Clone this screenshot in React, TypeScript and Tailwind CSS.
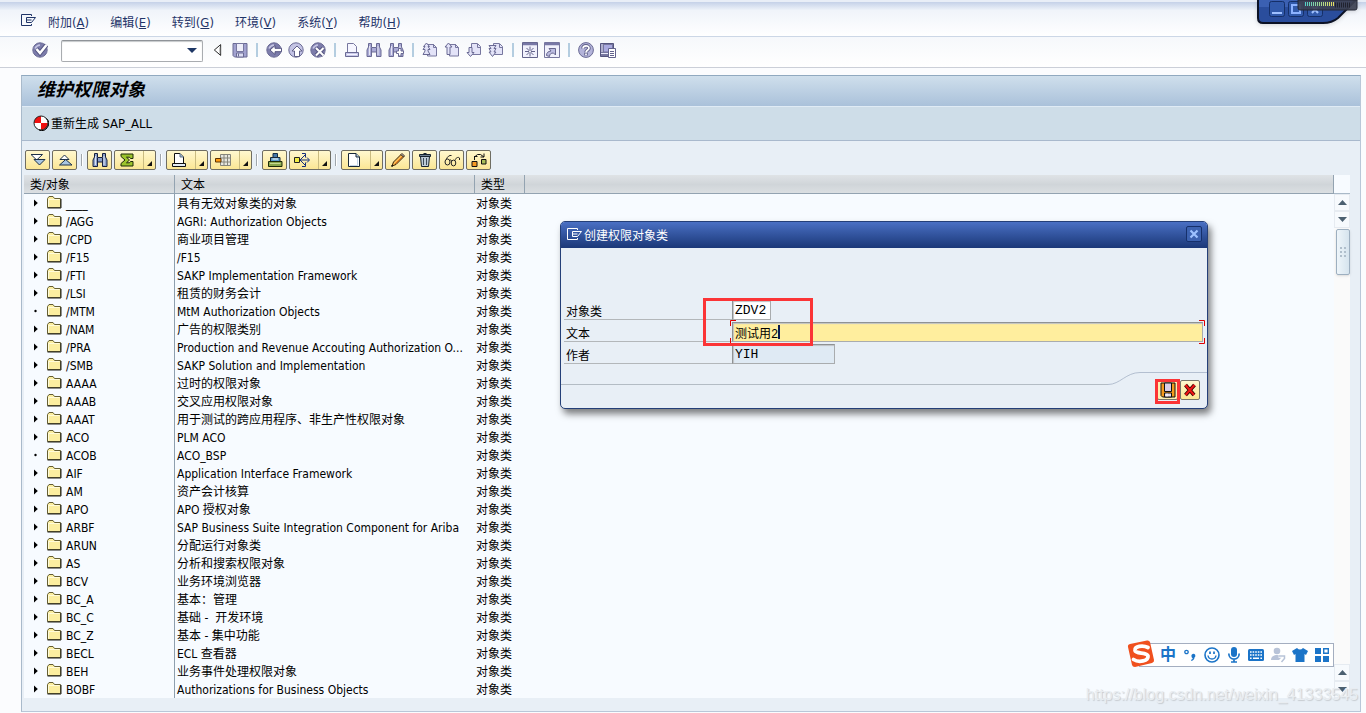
import clsx from "clsx";
import type { ReactNode } from "react";

const MENUS = [
  { label: "附加", key: "A" },
  { label: "编辑", key: "E" },
  { label: "转到", key: "G" },
  { label: "环境", key: "V" },
  { label: "系统", key: "Y" },
  { label: "帮助", key: "H" },
];

const OBJECT_CLASSES = [
  { name: "____", text: "具有无效对象类的对象" },
  { name: "/AGG", text: "AGRI: Authorization Objects" },
  { name: "/CPD", text: "商业项目管理" },
  { name: "/F15", text: "/F15" },
  { name: "/FTI", text: "SAKP Implementation Framework" },
  { name: "/LSI", text: "租赁的财务会计" },
  { name: "/MTM", text: "MtM Authorization Objects", leaf: true },
  { name: "/NAM", text: "广告的权限类别" },
  { name: "/PRA", text: "Production and Revenue Accouting Authorization O..." },
  { name: "/SMB", text: "SAKP Solution and Implementation" },
  { name: "AAAA", text: "过时的权限对象" },
  { name: "AAAB", text: "交叉应用权限对象" },
  { name: "AAAT", text: "用于测试的跨应用程序、非生产性权限对象" },
  { name: "ACO", text: "PLM ACO" },
  { name: "ACOB", text: "ACO_BSP", leaf: true },
  { name: "AIF", text: "Application Interface Framework" },
  { name: "AM", text: "资产会计核算" },
  { name: "APO", text: "APO 授权对象" },
  { name: "ARBF", text: "SAP Business Suite Integration Component for Ariba" },
  { name: "ARUN", text: "分配运行对象类" },
  { name: "AS", text: "分析和搜索权限对象" },
  { name: "BCV", text: "业务环境浏览器" },
  { name: "BC_A", text: "基本：管理" },
  { name: "BC_C", text: "基础 -  开发环境" },
  { name: "BC_Z", text: "基本 - 集中功能" },
  { name: "BECL", text: "ECL 查看器" },
  { name: "BEH", text: "业务事件处理权限对象" },
  { name: "BOBF", text: "Authorizations for Business Objects" },
];

interface IconProps {
  children: ReactNode;
  className?: string;
}

const Icon = ({ children, className }: IconProps) => (
  <svg viewBox="0 0 16 16" className={clsx("size-4 shrink-0", className)} fill="none" aria-hidden="true">
    {children}
  </svg>
);

const ExitIcon = () => (
  <Icon>
    <path d="M11.5 3V1.5H1.5V12.5H11.5V11" stroke="currentColor" />
    <path d="M12 4.5H6.5V9.5H11.500L15.500 4.500H11M7 7H11.500" stroke="currentColor" />
  </Icon>
);

const RoundBase = ({ light }: { light?: boolean }) => (
  <>
    <circle cx="8" cy="8" r="7.2" fill={light ? "#c2c2e4" : "#7c7cab"} stroke="#6c6c96" />
    <path d="M3 6.5A6 6 0 0 1 8 3" stroke="#c6c6e4" strokeWidth="1.5" />
  </>
);

const EnterIcon = () => (
  <Icon>
    <RoundBase />
    <path d="M4.500 7 8 11 14.500 3" stroke="#565682" strokeWidth="4.500" />
    <path d="M4.500 7 8 11 14.500 3" stroke="#fff" strokeWidth="2.500" />
  </Icon>
);

const SaveIcon = () => (
  <Icon>
    <path d="M1 1.500H15V15H2.500L1 13.500Z" fill="#a2a2d0" stroke="#6a6a94" />
    <path d="M4.500 1.500H11.500V9.500H4.500Z" fill="#eeeefa" stroke="#77779f" />
    <path d="M4.500 11H11.500V15H4.500Z" fill="#dcdcf2" stroke="#6a6a94" />
    <path d="M6.500 11.500V14.500" stroke="#6a6a94" />
  </Icon>
);

const BackIcon = () => (
  <Icon>
    <RoundBase />
    <path d="M4 8 9 3.500V6.300H15.500V9.700H9V12.500Z" fill="#fff" stroke="#565682" />
  </Icon>
);

const UpIcon = () => (
  <Icon>
    <RoundBase light />
    <path d="M9 4 14 9H11.500V14.500H6.500V9H4Z" fill="#fff" stroke="#606089" />
  </Icon>
);

const CancelIcon = () => (
  <Icon>
    <RoundBase />
    <path d="M6 6 13.500 13.500M13.500 6 6 13.500" stroke="#565682" strokeWidth="4" />
    <path d="M6 6 13.500 13.500M13.500 6 6 13.500" stroke="#fff" strokeWidth="2" />
  </Icon>
);

const PrintIcon = () => (
  <Icon>
    <path d="M3.5 1.5H9.5L12.5 4.5V10.5H3.5Z" fill="#f6f6ff" stroke="#77779f" />
    <path d="M1.500 10.500H14.500V14.500H1.500Z" fill="#c9c9ea" stroke="#6a6a94" />
    <path d="M3 12.5H13" stroke="#f3f3ff" />
  </Icon>
);

const Binoculars = ({ fill, stroke }: { fill: string; stroke: string }) => (
  <>
    <path
      d="M2.500 1.500H5.500V5.500H10.500V1.500H13.500V5L15 8V14.500H10.500V10H5.500V14.500H1V8L2.500 5Z"
      fill={fill}
      stroke={stroke}
    />
    <path d="M3.500 4V13M12 4V13" stroke="#fff" strokeOpacity=".7" />
    <path d="M5.500 6V10M10.500 6V10" stroke={stroke} />
  </>
);

const FindIcon = () => (
  <Icon>
    <Binoculars fill="#aaaad6" stroke="#6a6a94" />
  </Icon>
);

const FindNextIcon = () => (
  <Icon>
    <Binoculars fill="#aaaad6" stroke="#6a6a94" />
    <path d="M10.500 6.500H13V9H15.500V11.500H13V14H10.500V11.500H8.500V9H10.500Z" fill="#fff" stroke="#6a6a94" />
  </Icon>
);

const PageIcon = ({ arrow, right }: { arrow: string; right?: boolean }) => (
  <Icon>
    <path
      d={right ? "M5.5 1.5H11.5L14.5 4.5V12.5H5.5Z" : "M5.5 2.5H11.5L14.5 5.5V14H5.5Z"}
      fill="#e3e3f8"
      stroke="#77779f"
    />
    <path d="M11.5 2V5.5H14.5" stroke="#77779f" />
    <path d={arrow} fill="#e3e3f8" stroke="#6a6a94" />
  </Icon>
);

const SessionIcon = () => (
  <Icon>
    <path d="M.5 .5H15.5V15.5H.5Z" fill="#f1f1fc" stroke="#64648c" />
    <path d="M1 2H15" stroke="#7878a6" strokeWidth="2.500" />
    <path d="M8 4.500V14.500M3 9.500H13M4.500 6 11.500 13M11.500 6 4.500 13" stroke="#64648c" />
    <circle cx="8" cy="9.500" r="1" fill="#fff" />
  </Icon>
);

const ShortcutIcon = () => (
  <Icon>
    <path d="M.5 .5H15.5V15.5H.5Z" fill="#f1f1fc" stroke="#77779f" />
    <path d="M1 2H15" stroke="#7878a6" strokeWidth="2.500" />
    <path d="M2.500 13.500C2.500 10.500 4 9.500 7 9L5 6.500H11.500V13L9.500 11C7 11 5.500 12 5.500 14.500Z" fill="#bcbce1" stroke="#67678f" />
  </Icon>
);

const HelpIcon = () => (
  <Icon>
    <circle cx="8" cy="8" r="7.4" fill="#b4b4da" stroke="#6a6a94" />
    <path d="M5 6.500C5 3 11 3 11 6.200 11 8 8 8 8 10.500M8 11V13.500" stroke="#606089" strokeWidth="3.500" />
    <path d="M5 6.500C5 3 11 3 11 6.200 11 8 8 8 8 10.500M8 11.500V13.200" stroke="#fff" strokeWidth="1.700" />
  </Icon>
);

const LayoutIcon = () => (
  <Icon>
    <path d="M.5 1.5H13.5V14.5H.5Z" fill="#77779f" stroke="#55557f" />
    <path d="M4 3H12V9.5H4Z" fill="#aaaadf" />
    <path d="M2 2V10M1 11.5H9" stroke="#e9e9fa" />
    <path d="M8.5 6.5H15.5V15.5H8.5Z" fill="#fff" stroke="#62628d" />
    <path d="M10 9.5H14M10 11.5H14M10 13.5H14" stroke="#62628d" />
  </Icon>
);

const RegenerateIcon = () => (
  <Icon>
    <circle cx="8" cy="8" r="7" fill="#fff" />
    <path d="M8 8H15A7 7 0 0 1 8 15ZM8 8V1A7 7 0 0 0 1 8Z" fill="#f01010" />
    <circle cx="8" cy="8" r="7" stroke="#222" />
    <path d="M13.500 3.500A7 7 0 0 1 6 15" stroke="#000" />
  </Icon>
);

const ExpandAllIcon = () => (
  <Icon>
    <path d="M1 2.500H12.500L6.700 8Z" fill="#fff" stroke="#1c3048" />
    <path d="M4 7.500H15L9.500 13Z" fill="#a9c6e2" stroke="#1c3048" />
  </Icon>
);

const CollapseAllIcon = () => (
  <Icon>
    <path d="M3 7.500 7.500 3 12 7.500Z" fill="#fff" stroke="#1c3048" />
    <path d="M2.500 13 8.700 7.500 15 13Z" fill="#a9c6e2" stroke="#1c3048" />
  </Icon>
);

const SumIcon = () => (
  <Icon>
    <path d="M2 2H14V6.500H11.500L10.500 5.200H7.500L10.500 8 7.500 10.800H10.500L11.500 9.500H14V14H2V11.500L6 8 2 4.500Z" fill="#9cc42c" stroke="#1d2a08" />
  </Icon>
);

const SheetPrintIcon = () => (
  <Icon>
    <path d="M3.5 1.5H9L12.5 5V11.5H3.5Z" fill="#fff" stroke="#111" />
    <path d="M9 1.5V5H12.5" fill="#9bb4cd" stroke="#5d7184" />
    <path d="M1.5 11.5H14.5V14.5H1.5Z" fill="#e4edf5" stroke="#111" />
  </Icon>
);

const GridIcon = () => (
  <Icon>
    <path d="M5.5 2.5H15.5V13.5H5.5Z" fill="#e7e7df" stroke="#85857b" />
    <path d="M9 2V14M12.5 2V14M5 6H16M5 10H16" stroke="#85857b" />
    <path d="M.5 6.5H6V10H.5Z" fill="#ff9b12" stroke="#5b3200" />
  </Icon>
);

const ExportPrintIcon = () => (
  <Icon>
    <path d="M6 1.500H10.500V5.500H6Z" fill="#4678a8" stroke="#152d42" />
    <path d="M3.500 5.500H13V9.500H3.500Z" fill="#5d9bca" stroke="#182838" />
    <path d="M5.500 7H11" stroke="#fff" />
    <path d="M1.500 9.500H15V14.500H1.500Z" fill="#88a64a" stroke="#1d2a08" />
    <path d="M3 11.500H13.500" stroke="#c7d991" />
  </Icon>
);

const BranchIcon = () => (
  <Icon>
    <path d="M6 8H15M6 8 11 3M6 8 11 13M8 1.500H11.500V5.500M8 14.500H11.500V10.500M13 5.500 15.500 8 13 10.500" stroke="#152e7a" />
    <path d="M.5 5.5H5.5V10.5H.5Z" fill="#f1ed45" stroke="#222" />
  </Icon>
);

const NewIcon = () => (
  <Icon>
    <path d="M2.5 1.5H10L13.5 5V14.5H2.5Z" fill="#fff" stroke="#182838" />
    <path d="M10 1.5V5H13.5" fill="#b4c9de" stroke="#182838" />
    <path d="M11.5 6V13.5H4" stroke="#c5d6e6" />
  </Icon>
);

const PencilIcon = () => (
  <Icon>
    <path d="M2 14 3.5 10 11 2.5 13.5 5 6 12.5Z" fill="#f8bd54" stroke="#392005" />
    <path d="M5 12 12.5 4.5" stroke="#e66b13" />
    <path d="M11 2.5 12 1.5 14.5 4 13.5 5Z" fill="#cce0f1" stroke="#392005" />
    <path d="M1.500 14.500 2.500 13.500" stroke="#000" strokeWidth="1.500" />
  </Icon>
);

const TrashIcon = () => (
  <Icon>
    <path d="M3.5 4.5H12.5L11.5 14.5H4.5Z" fill="#bdcbd8" stroke="#17232f" />
    <path d="M2.5 2.5H13.5V4.5H2.5ZM6.5 1.5H9.5" fill="#6f8192" stroke="#17232f" />
    <path d="M6.5 6V13M9.5 6V13" stroke="#3e4c59" />
  </Icon>
);

const GlassesIcon = () => (
  <Icon>
    <ellipse cx="3.500" cy="10" rx="2.500" ry="3" stroke="#222" />
    <ellipse cx="9.500" cy="11" rx="2.300" ry="2.900" stroke="#222" />
    <path d="M5.500 8.500C6.500 7.500 7.500 8 7.500 9M2.500 7C3.500 4.500 5.500 3 7.500 3.500M11 8.500C11.500 6 14 4.500 15.500 6V8" stroke="#222" />
  </Icon>
);

const WhereUsedIcon = () => (
  <Icon>
    <path d="M3.500 8V5L6.500 2.500H9.500L13 5M9.500 5H13V1.500M3 4.500H6.500" stroke="#111" />
    <path d="M1 9.500H6V14.500H1Z" fill="#f59a22" stroke="#111" />
    <path d="M10.500 7.500H15V12H10.500Z" fill="#a7bd57" stroke="#111" />
  </Icon>
);

const FolderIcon = () => (
  <svg viewBox="0 0 15 13" className="mb-px h-[13px] w-[15px] shrink-0" fill="none" aria-hidden="true">
    <path d="M.5 11.5V2.5L2 .5H6L7.5 2.5H13.5V11.5Z" fill="#fbeea0" stroke="#655f32" />
    <path d="M1.5 10.5V3.5H12.5" stroke="#fffbd9" />
    <path d="M.5 12H14V3" stroke="#22221c" />
  </svg>
);

const Divider = () => <span className="mx-2 h-[14px] w-0.5 bg-[#b4cde0]" />;

const ToolButton = ({ label, children }: { label: string; children: ReactNode }) => (
  <button type="button" aria-label={label} className="flex size-4 items-center justify-center">
    {children}
  </button>
);

const StandardToolbar = () => (
  <div className="flex h-[31px] items-center border-b border-[#cbcfd8] bg-linear-to-b from-[#f6f8fb] to-white pb-1 pl-8">
    <ToolButton label="Enter"><EnterIcon /></ToolButton>
    <div className="relative mt-0.5 ml-[13px]">
      <select
        aria-label="Command"
        className="block h-[22px] w-[142px] appearance-none rounded-xs border border-[#a9acb0] border-t-[#8f9398] bg-white text-xs shadow-[inset_0_1px_1px_#c5c8ca]"
      >
        <option></option>
      </select>
      <svg viewBox="0 0 10 5" className="pointer-events-none absolute top-2 right-1.5 h-[5px] w-[10px]" aria-hidden="true">
        <path d="M0 0H10L5 5Z" fill="#1e3765" />
      </svg>
    </div>
    <button type="button" aria-label="Hide command field" className="mx-2.5">
      <svg viewBox="0 0 10 14" className="h-[14px] w-[9px]" aria-hidden="true">
        <path d="M8.5 1V13L1.5 7Z" fill="#fff" stroke="#111" />
        <path d="M7.5 4V11" stroke="#aaa" />
      </svg>
    </button>
    <ToolButton label="Save"><SaveIcon /></ToolButton>
    <Divider />
    <div className="flex gap-1.5">
      <ToolButton label="Back"><BackIcon /></ToolButton>
      <ToolButton label="Exit"><UpIcon /></ToolButton>
      <ToolButton label="Cancel"><CancelIcon /></ToolButton>
    </div>
    <Divider />
    <div className="flex gap-1.5">
      <ToolButton label="Print"><PrintIcon /></ToolButton>
      <ToolButton label="Find"><FindIcon /></ToolButton>
      <ToolButton label="Find next"><FindNextIcon /></ToolButton>
    </div>
    <Divider />
    <div className="flex gap-1.5">
      <ToolButton label="First page">
        <PageIcon arrow="M4.500 1 7.500 4.500H6L8 7.500H6V9L8 12.500H1L3 9V7.500H1L3 4.500H1.500Z" />
      </ToolButton>
      <ToolButton label="Previous page">
        <PageIcon arrow="M4.500 1 8 5H6V12.500H3V5H1Z" />
      </ToolButton>
      <ToolButton label="Next page">
        <PageIcon right arrow="M3 5.500H6V10.500H8L4.500 14.500 1 10.500H3Z" />
      </ToolButton>
      <ToolButton label="Last page">
        <PageIcon right arrow="M1 3.500H8L6 6.500H8L6 10H8L4.500 14.500 1 10H3L1 6.500H3Z" />
      </ToolButton>
    </div>
    <Divider />
    <div className="flex gap-1.5">
      <ToolButton label="New session"><SessionIcon /></ToolButton>
      <ToolButton label="Create shortcut"><ShortcutIcon /></ToolButton>
    </div>
    <Divider />
    <div className="flex gap-1.5">
      <ToolButton label="Help"><HelpIcon /></ToolButton>
      <ToolButton label="Customize layout"><LayoutIcon /></ToolButton>
    </div>
  </div>
);

interface GridButtonProps {
  label: string;
  split?: boolean;
  children: ReactNode;
}

const GridButton = ({ label, split, children }: GridButtonProps) => (
  <button
    type="button"
    aria-label={label}
    className={clsx(
      "flex h-5 items-center rounded-xs border border-[#6f6d62] bg-linear-to-b from-[#fff8cf] to-[#fbe694] pl-1",
      split ? "w-[42px]" : "w-[25px]",
    )}
  >
    {children}
    {split && (
      <span className="ml-auto flex h-full w-3 items-end justify-end border-l border-[#c9bb80] pr-[3px] pb-[3px]">
        <svg viewBox="0 0 5 5" className="size-[5px]" aria-hidden="true">
          <path d="M5 0V5H0Z" fill="#111" />
        </svg>
      </span>
    )}
  </button>
);

const GridDivider = () => <span className="mx-1 h-3 w-0.5 border-l border-[#9fa6ac] bg-white" />;

const GridToolbar = () => (
  <div className="flex items-center pt-[9px] pb-[5px] pl-[3px]">
    <div className="flex gap-0.5">
      <GridButton label="Expand"><ExpandAllIcon /></GridButton>
      <GridButton label="Collapse"><CollapseAllIcon /></GridButton>
    </div>
    <GridDivider />
    <div className="flex gap-0.5">
      <GridButton label="Find">
        <Icon><Binoculars fill="#8ba1cb" stroke="#16203d" /></Icon>
      </GridButton>
      <GridButton label="Total" split><SumIcon /></GridButton>
    </div>
    <GridDivider />
    <div className="flex gap-0.5">
      <GridButton label="Print" split><SheetPrintIcon /></GridButton>
      <GridButton label="Layout" split><GridIcon /></GridButton>
    </div>
    <GridDivider />
    <div className="flex gap-0.5">
      <GridButton label="Transport"><ExportPrintIcon /></GridButton>
      <GridButton label="Hierarchy" split><BranchIcon /></GridButton>
    </div>
    <GridDivider />
    <div className="flex gap-0.5">
      <GridButton label="Create" split><NewIcon /></GridButton>
      <GridButton label="Change"><PencilIcon /></GridButton>
      <GridButton label="Delete"><TrashIcon /></GridButton>
      <GridButton label="Display"><GlassesIcon /></GridButton>
      <GridButton label="Where used"><WhereUsedIcon /></GridButton>
    </div>
  </div>
);

const ScrollArrow = ({ down }: { down?: boolean }) => (
  <button
    type="button"
    aria-label={down ? "Scroll down" : "Scroll up"}
    className="flex h-[17px] w-full shrink-0 items-center justify-center border border-[#e6ebf1] bg-[#f7fafd]"
  >
    <svg viewBox="0 0 9 5" className="h-[5px] w-[9px]" aria-hidden="true">
      <path d={down ? "M0 0H9L4.5 5Z" : "M0 5H9L4.5 0Z"} fill="#4c6070" />
    </svg>
  </button>
);

const ScrollBar = () => (
  <div className="flex w-4 flex-col bg-[#fafafa]">
    <div className="h-[19px] border-b border-[#a9b9c8] bg-[#f7fbff]" />
    <ScrollArrow />
    <ScrollArrow down />
    <div className="mt-px ml-0.5 flex h-[46px] items-center justify-center rounded-xs border border-[#9dafc0] bg-linear-to-r from-[#eef5fa] to-[#d6e4ee] shadow-sm">
      <span className="grid grid-cols-2 gap-0.5">
        {[0, 1, 2, 3, 4, 5].map((dot) => (
          <i key={dot} className="size-0.5 bg-[#b0bfcc]" />
        ))}
      </span>
    </div>
    <div className="flex-1" />
    <ScrollArrow />
    <ScrollArrow down />
  </div>
);

const headClass = "border-r border-b border-[#93a3b1] p-0 pt-0.5 pl-1.5 font-normal";

const ObjectTable = () => (
  <table className="min-w-0 flex-1 table-fixed border-separate border-spacing-0 bg-[#f7fbff] text-left">
    <colgroup>
      <col className="w-[151px]" />
      <col className="w-[300px]" />
      <col className="w-[50px]" />
      <col />
    </colgroup>
    <thead>
      <tr className="h-[19px] bg-linear-to-b from-[#dfe3e6] via-[#d0d5d9] to-[#dce0e3] leading-4">
        <th className={headClass}>类/对象</th>
        <th className={headClass}>文本</th>
        <th className={headClass}>类型</th>
        <th className={headClass} />
      </tr>
    </thead>
    <tbody>
      {OBJECT_CLASSES.map((item) => (
        <tr key={item.name} className="h-[18px] leading-4 whitespace-nowrap">
          <td className="border-r border-[#8e9fae] p-0">
            <div className="flex h-[18px] items-center pl-2.5">
              <svg viewBox="0 0 5 8" className="mr-2 h-2 w-[5px]" aria-hidden="true">
                {item.leaf ? <circle cx="1.5" cy="4" r="1.2" /> : <path d="M0 .5 3.800 4 0 7.500Z" />}
              </svg>
              <FolderIcon />
              <span className="ml-1 pt-0.5">{item.name}</span>
            </div>
          </td>
          <td className="p-0 pt-0.5 pl-0.5 whitespace-pre">{item.text}</td>
          <td className="p-0 pt-0.5 pl-px">对象类</td>
          <td className="p-0" />
        </tr>
      ))}
    </tbody>
  </table>
);

const WindowControls = () => (
  <div className="absolute top-0 right-0">
    <svg viewBox="0 0 109 26" className="h-[26px] w-[109px] drop-shadow-sm" fill="none" aria-hidden="true">
      <path d="M1 0V18Q1 23 6 23H66Q75 23 81 18L99 0Z" fill="#2a4d9c" stroke="#0c1226" strokeWidth="2" />
      <path d="M2 0H96L88 7H2Z" fill="#3b60b2" />
      <rect x="12.5" y="1.5" width="15" height="15" rx="2" fill="#3159aa" stroke="#152f68" />
      <rect x="31.5" y="1.5" width="15" height="15" rx="2" fill="#3159aa" stroke="#152f68" />
      <rect x="50.5" y="1.5" width="15" height="15" rx="2" fill="#3159aa" stroke="#152f68" />
      <path d="M15 13H25" stroke="#9fc0ff" strokeWidth="2" />
      <path d="M35 5H43V13H35Z" stroke="#8db2ff" strokeWidth="2" />
      <path d="M55 13 61 6M61 13 55 6" stroke="#9fc0ff" strokeWidth="2" />
      <path d="M41 0H100V8Q100 10 98 10H43Q41 10 41 8Z" fill="#3d4152" fillOpacity=".92" stroke="#252836" />
      <path d="M48 4H78" stroke="url(#meter)" strokeWidth="4" strokeDasharray="1 1" />
      <path d="M78 5H93" stroke="#20222e" strokeWidth="5" strokeDasharray="1 1" />
      <defs>
        <linearGradient id="meter" gradientUnits="userSpaceOnUse" x1="48" y1="0" x2="78" y2="0">
          <stop stopColor="#4fd0c8" />
          <stop offset="1" stopColor="#f0e05a" />
        </linearGradient>
      </defs>
    </svg>
  </div>
);

const DialogCorners = () => (
  <svg viewBox="0 0 475 24" className="pointer-events-none absolute -top-0.5 -left-0.5 h-6 w-[475px]" fill="none" aria-hidden="true">
    <path d="M6 .5H.5V6M469 .5H474.5V6M.5 18V23.5H6M474.5 18V23.5H469" stroke="#e00000" />
  </svg>
);

const labelClass = "h-full w-[168px] border-b border-[#b3b7ba] pt-1 pl-0.5 leading-5";
const fieldClass =
  "h-5 border border-[#a9acae] border-t-[#8f9294] border-l-[#8f9294] pl-0.5 shadow-[inset_1px_1px_1px_#bfc3c5] outline-none";

const CreateDialog = () => (
  <div
    role="dialog"
    aria-labelledby="dialog-title"
    className="absolute top-[221px] left-[560px] w-[648px] rounded-[5px] border border-[#243f78] bg-[#e8eff6] shadow-[3px_5px_7px_rgba(0,0,0,0.5)]"
  >
    <div className="flex h-[26px] items-center rounded-t-sm bg-linear-to-b from-[#4a70c4] to-[#1b3878] pr-[5px] pl-[5px] text-white">
      <ExitIcon />
      <h2 id="dialog-title" className="ml-0.5 pt-0.5">创建权限对象类</h2>
      <button
        type="button"
        aria-label="Close"
        className="mb-0.5 ml-auto flex size-4 items-center justify-center rounded-xs border border-[#16306b] bg-[#3c62b0]"
      >
        <svg viewBox="0 0 10 10" className="size-[10px]" aria-hidden="true">
          <path d="M1.5 1.5 8.5 8.5M8.5 1.5 1.5 8.5" stroke="#9ec2ff" strokeWidth="2.2" />
        </svg>
      </button>
    </div>
    <form className="pt-[50px] pl-[3px]">
      <div className="flex h-[22px] items-end">
        <label htmlFor="object-class" className={labelClass}>对象类</label>
        <input
          id="object-class"
          defaultValue="ZDV2"
          className={clsx(fieldClass, "w-[39px] bg-white font-['Liberation_Mono',monospace] text-[13px]")}
        />
      </div>
      <div className="flex h-[22px] items-end pr-1">
        <label htmlFor="object-text" className={labelClass}>文本</label>
        <div className="relative flex-1">
          <input
            id="object-text"
            defaultValue="测试用2"
            className={clsx(fieldClass, "block w-full bg-[#ffee9e] pt-0.5 font-['Liberation_Mono','Noto_Sans_CJK_SC',monospace] text-xs")}
          />
          <DialogCorners />
          <span className="absolute top-[3px] left-[46px] h-[14px] w-0.5 bg-[#0b1c50]" />
        </div>
      </div>
      <div className="flex h-[22px] items-end">
        <label htmlFor="author" className={labelClass}>作者</label>
        <input
          id="author"
          readOnly
          defaultValue="YIH"
          className={clsx(fieldClass, "w-[103px] bg-[#dfeaf4] font-['Liberation_Mono',monospace] text-[13px]")}
        />
      </div>
    </form>
    <div className="flex items-start pt-2">
      <div className="h-[13px] flex-1 border-b border-[#b3bcc4]" />
      <svg viewBox="0 0 32 13" className="h-[13px] w-8" fill="none" aria-hidden="true">
        <path d="M0 12.5C12 12.5 18 .5 32 .5" stroke="#b3bfd0" />
      </svg>
      <div className="flex w-[67px] justify-end gap-0.5 border-t border-[#b3bfd0] pt-[7px] pr-[7px] pb-2">
        <div className="relative">
          <button
            type="button"
            aria-label="Save"
            className="flex h-5 w-[21px] items-center justify-center rounded-xs border border-[#77756a] bg-[#fdefae]"
          >
            <Icon>
              <path d="M1 1H15V15H2.500L1 13.500Z" fill="#f59a1c" stroke="#111" />
              <path d="M4.500 1H11.500V9.500H4.500Z" fill="#d9cde6" stroke="#111" />
              <path d="M4.500 11H11.500V15H4.500Z" fill="#e6dcec" stroke="#111" />
              <path d="M7 11.500V14.500" stroke="#fff" />
            </Icon>
          </button>
          <span className="pointer-events-none absolute -inset-x-0.5 -top-px -bottom-1 border-3 border-[#fb3436]" />
        </div>
        <button
          type="button"
          aria-label="Cancel"
          className="flex h-5 w-5 items-center justify-center rounded-xs border border-[#77756a] bg-linear-to-b from-[#fff8cf] to-[#fbe694]"
        >
          <Icon>
            <path d="M3.500 3 12 13M12.500 3 3.500 13" stroke="#3c0000" strokeWidth="3.800" />
            <path d="M3.500 3 12 13M12.500 3 3.500 13" stroke="#f01515" strokeWidth="2" />
          </Icon>
        </button>
      </div>
    </div>
    <span className="pointer-events-none absolute top-[76px] left-[142px] h-12 w-[110px] border-3 border-[#fb3436]" />
  </div>
);

const InputMethodBar = () => (
  <div className="absolute top-[640px] right-8 flex h-7 w-[207px] items-center">
    <div className="absolute inset-x-0 top-[3px] bottom-px ml-3 border border-[#a4aec0] bg-white" />
    <svg viewBox="0 0 28 28" className="relative size-7" fill="none" aria-hidden="true">
      <path d="M3 4Q.5 4.500 1 7L5 25Q5.500 27 8 27L25 23Q27.500 22 27 20L23 2Q22 0 20 .5Z" fill="#f0501e" />
      <path d="M21 7.500C16 5 7 6 8 10.500 9 14.500 20 11.500 21 16 21.500 21 12 23 6.500 19.500" stroke="#fff" strokeWidth="3.800" strokeLinecap="round" />
    </svg>
    <div className="relative ml-[5px] flex items-center gap-1.5 pt-0.5 text-[#1b74c8]">
      <span className="w-4 text-center text-base leading-4 font-bold">中</span>
      <Icon>
        <circle cx="4.5" cy="5" r="1.7" stroke="currentColor" strokeWidth="1.3" />
        <path d="M9.5 9.5A2 2 0 1 1 12.5 10.5C12.5 12.5 11 13.5 9.5 14L9 13C10 12.5 10.7 12 10.7 11.3A2 2 0 0 1 9.5 9.5Z" fill="currentColor" />
      </Icon>
      <Icon>
        <circle cx="8" cy="8" r="7" stroke="currentColor" strokeWidth="1.6" />
        <path d="M4 8.5Q4.5 12 8 12T12 8.5" stroke="currentColor" strokeWidth="1.4" />
        <path d="M6 4.5V7M10 4.5V7" stroke="currentColor" strokeWidth="1.7" />
      </Icon>
      <Icon>
        <rect x="5" y="0" width="6" height="10" rx="3" fill="currentColor" />
        <path d="M2.8 6.5C2.8 14 13.2 14 13.2 6.5M8 12V15M5 15H11" stroke="currentColor" strokeWidth="1.7" />
      </Icon>
      <Icon>
        <rect x="0" y="2" width="16" height="12" rx="1.5" fill="currentColor" />
        <path d="M2 5H14M2 8H14" stroke="#fff" strokeWidth="1.6" strokeDasharray="1.6 1" />
        <path d="M2 11.2H3.6M5 11.2H11M12.4 11.2H14" stroke="#fff" strokeWidth="1.6" />
      </Icon>
      <Icon className="text-[#b8c3d8]">
        <circle cx="7" cy="4" r="3.3" fill="currentColor" />
        <path d="M1 13C1 7 10 7 12 10L9 13Z" fill="currentColor" />
        <path d="M8.5 9H14.5V11.5L11.5 15" stroke="#fff" strokeWidth="3.5" />
        <path d="M8.5 9H14.5V11.5L11.5 15" stroke="currentColor" strokeWidth="1.5" />
      </Icon>
      <Icon>
        <path d="M5 1Q8 4 11 1L16 4 14 8 12.5 7V15H3.5V7L2 8 0 4Z" fill="currentColor" />
      </Icon>
      <Icon>
        <path d="M1 1H7V7H1ZM1 9H7V15H1ZM9 9H15V15H9Z" fill="currentColor" />
        <path d="M9.7 1.7H14.3V6.3H9.7Z" stroke="currentColor" strokeWidth="1.4" />
      </Icon>
    </div>
  </div>
);

const App = () => {
  return (
    <div className="relative overflow-hidden bg-[#fbfcfe] pb-px font-['DejaVu_Sans_Condensed','Noto_Sans_CJK_SC',sans-serif] text-xs text-black">
      <header>
        <nav className="flex h-[37px] items-center border-t-2 border-b border-t-[#e9eef7] border-b-[#ccd7e6] bg-linear-to-b from-[#c5d1e8] via-[#f0f4fa] via-25% to-white pt-2 pl-5 text-[#1f3468]">
          <span className="pb-1"><ExitIcon /></span>
          <ul className="ml-3 flex gap-[21px]">
            {MENUS.map((menu) => (
              <li key={menu.key}>
                <button type="button">
                  {menu.label}
                  <span className="text-[13px]">(<u>{menu.key}</u>)</span>
                </button>
              </li>
            ))}
          </ul>
        </nav>
        <StandardToolbar />
      </header>

      <main className="mt-[7px] mr-[5px] ml-[21px] border border-[#b9c7d8] border-t-[#90a9c0] border-l-[#a9bacb] bg-[#e8eff6]">
        <h1 className="h-[31px] border-b border-[#e0ebf5] bg-linear-to-b from-[#cfdfec] to-[#aac1da] pl-[15px] text-lg leading-[28px] font-bold italic">
          维护权限对象
        </h1>
        <div className="flex h-[34px] items-center border-b border-[#a9b9cd] bg-[#cedde8] pl-[11px]">
          <button type="button" className="flex items-center gap-0.5">
            <RegenerateIcon />
            <span>
              重新生成 <span className="text-[13px]">SAP_ALL</span>
            </span>
          </button>
        </div>
        <GridToolbar />
        <div className="mr-2.5 mb-[13px] ml-0.5 flex">
          <ObjectTable />
          <ScrollBar />
        </div>
      </main>

      <WindowControls />
      <CreateDialog />
      <InputMethodBar />
      <p className="pointer-events-none absolute right-2 bottom-1.5 font-['Liberation_Sans',sans-serif] text-base leading-6 text-[#e9edf1] [text-shadow:1px_1px_1px_#c6cbd0]">
        https://blog.csdn.net/weixin_41333545
      </p>
    </div>
  );
};

export default App;
